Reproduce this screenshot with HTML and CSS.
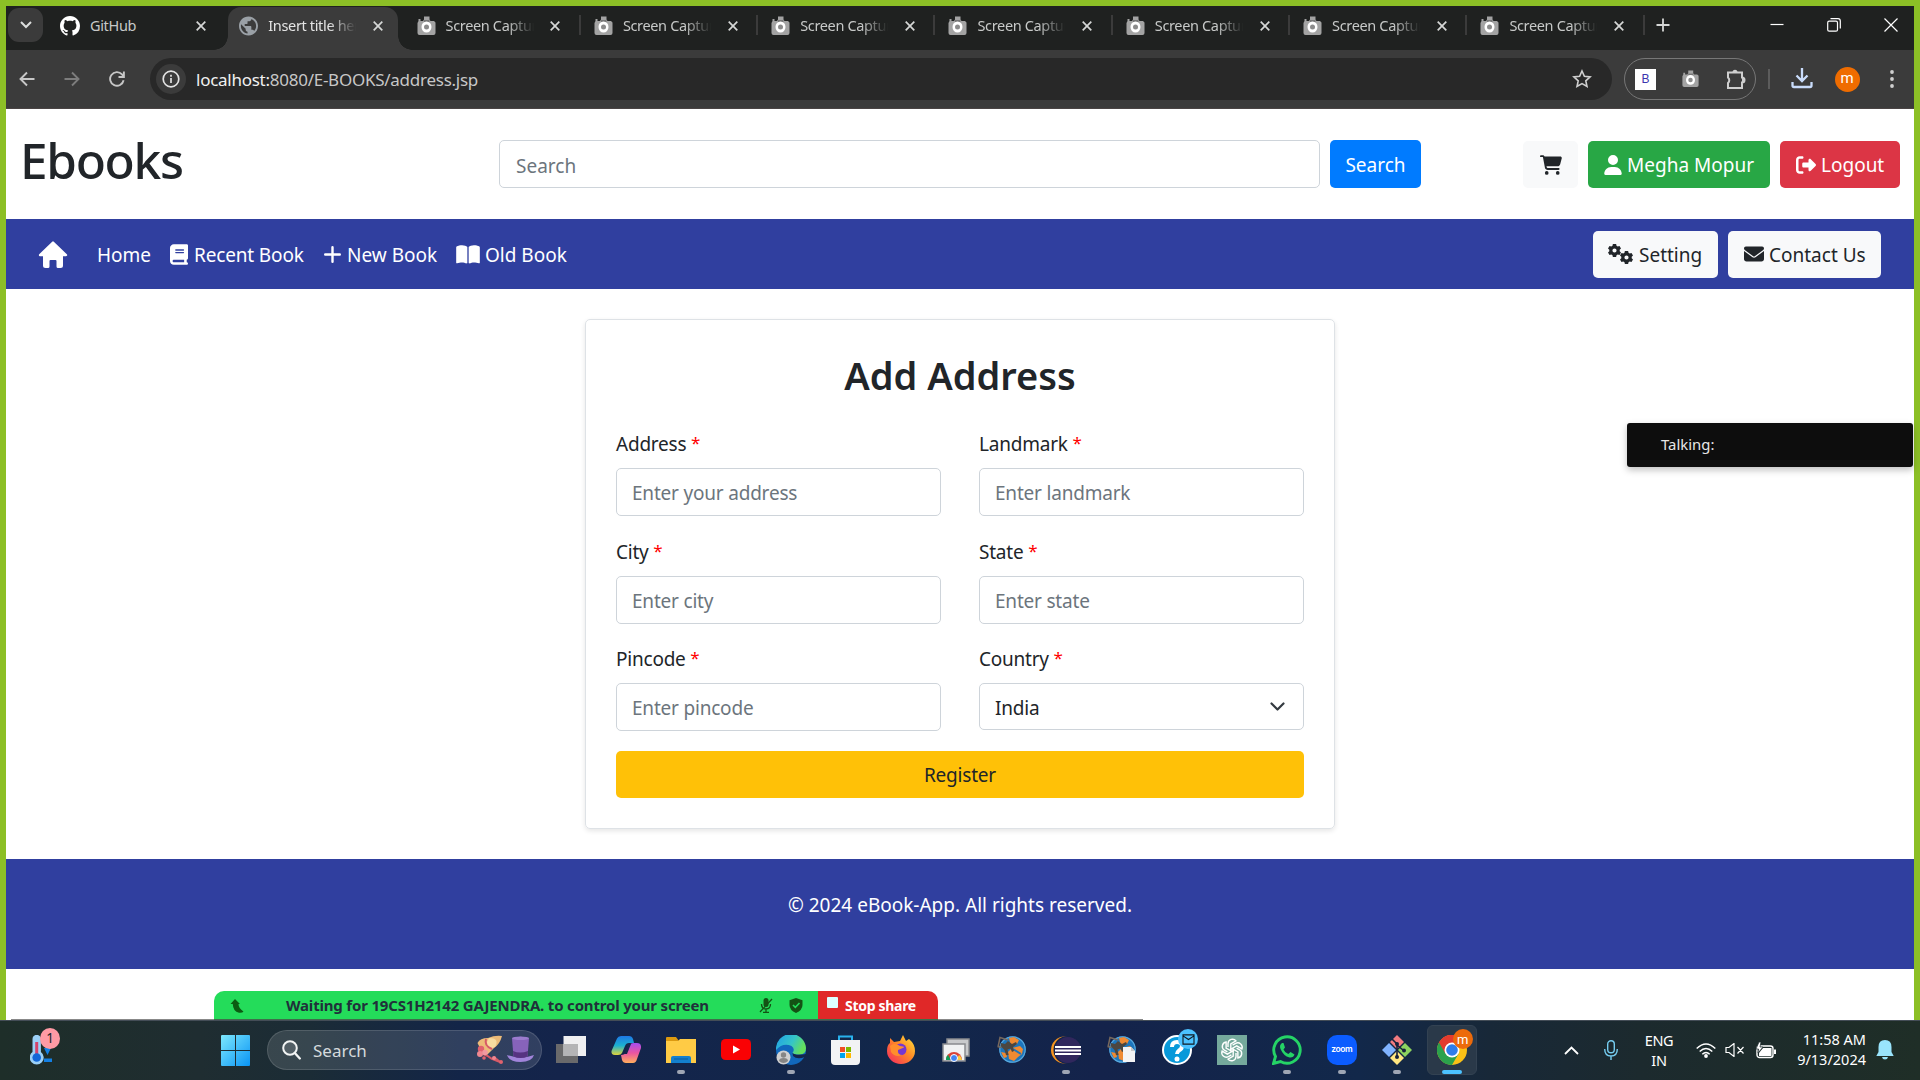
FILE: index.html
```html
<!DOCTYPE html>
<html lang="en">
<head>
<meta charset="utf-8">
<title>Insert title here</title>
<link rel="stylesheet" href="styles.css">
</head>
<body>
<svg class="defs" aria-hidden="true">
  <symbol id="camera" viewBox="0 0 19 20"><path d="M1.500 5V3h2v2H6l1-1.500V.5h5.500v3l1 1.500H17l1.500 1.500V17q0 2-2 2h-14q-2 0-2-2V7z" fill="#a3a3a3"/><path d="M7 4h5.500v2H7z" fill="#777"/><ellipse cx="9.500" cy="11" rx="5" ry="5.500" fill="#fff"/><circle cx="9.500" cy="11" r="2.500" fill="#8b8b8b"/></symbol>
  <symbol id="close" viewBox="0 0 10 10"><path d="M.7.7l8.600 8.600M9.300.7L.7 9.300" stroke="#d5d7d6" stroke-width="1.700" fill="none"/></symbol>
  <symbol id="gear" viewBox="-10 -10 20 20"><path fill-rule="evenodd" d="M-2.500-10h5l.6 2.800 1.800 1 2.800-.9 2.300 4L8-1.200v2.400L10 3.100l-2.300 4-2.800-.9-1.800 1L2.500 10h-5l-.6-2.800-1.800-1-2.800.9-2.300-4L-8 1.200v-2.400L-10-3.100l2.300-4 2.800.9 1.800-1zM0-3.200a3.200 3.200 0 1 0 0 6.400a3.200 3.200 0 1 0 0-6.400z"/></symbol>
  <symbol id="chrome" viewBox="0 0 48 48"><circle cx="24" cy="24" r="24" fill="#fbc116"/><path d="M24 24L3.200 12A24 24 0 0 1 44.800 12z" fill="#ea4335"/><path d="M24 24L3.200 12A24 24 0 0 0 24 48l10.400-18z" fill="#2ba24c"/><path d="M24 12h20.800A24 24 0 0 0 3.200 12l10.400 18z" fill="#e33b2e"/><circle cx="24" cy="24" r="12" fill="#fff"/><circle cx="24" cy="24" r="9.300" fill="#2f7de9"/></symbol>
  <symbol id="tomcat" viewBox="0 0 30 30"><circle cx="16.500" cy="14.500" r="13.200" fill="#1c75bd"/><circle cx="16.500" cy="14.500" r="12.700" fill="none" stroke="#58a8dc" stroke-width="1.200"/><path d="M13 3l5-1 5 3-2 4-6 2zM12 17l4-4 8-2 3 3-1 5-4 3-4 4-5-2zM5 17l5 1 1 4-3 1z" fill="#ef8a32"/><path d="M17 14l8 5" stroke="#1c75bd" stroke-width="2"/><path d="M5 8l4 1 3-3 4 3 4-2 1 2-4 3 1 4-2 1-1.500-3.500-3 1 1 5.500-2.500 0-1.500-5-4-4z" fill="#4c4640"/><path d="M2 12L4 2.500l8 2.500M1.500 11.500l4 1" fill="none" stroke="#77685c" stroke-width="1.500"/></symbol>
</svg>

<div class="screen">
  <div class="tabstrip">
    <button class="tab-search"><svg width="12" height="8" viewBox="0 0 12 8"><path d="M1 1l5 5 5-5" fill="none" stroke="#dcdedd" stroke-width="2"/></svg></button>
    <div class="tabs">
      <div class="tab"><svg class="fav gh" viewBox="0 0 16 16"><path fill="#fff" d="M8 0C3.580 0 0 3.580 0 8c0 3.540 2.290 6.530 5.470 7.590.4.070.55-.17.55-.38 0-.19-.01-.82-.01-1.490-2.010.37-2.530-.49-2.690-.94-.09-.23-.48-.94-.82-1.130-.28-.15-.68-.52-.01-.53.63-.01 1.080.58 1.230.82.72 1.210 1.870.87 2.330.66.07-.52.28-.87.51-1.070-1.780-.2-3.640-.89-3.640-3.950 0-.87.31-1.590.82-2.150-.08-.2-.36-1.020.08-2.120 0 0 .67-.21 2.200.82.64-.18 1.320-.27 2-.27s1.360.09 2 .27c1.530-1.040 2.200-.82 2.200-.82.44 1.100.16 1.920.08 2.120.51.56.82 1.270.82 2.150 0 3.070-1.870 3.750-3.650 3.950.29.25.54.73.54 1.480 0 1.070-.01 1.930-.01 2.200 0 .21.15.46.55.38A8.010 8.010 0 0 0 16 8c0-4.420-3.580-8-8-8z"/></svg><span class="tab-title">GitHub</span><svg class="x"><use href="#close"/></svg></div>
      <div class="tab active"><svg class="fav" viewBox="2 2 20 20"><path fill="#9aa0a6" d="M12 2C6.480 2 2 6.480 2 12s4.480 10 10 10 10-4.480 10-10S17.520 2 12 2zm-1 17.930c-3.950-.49-7-3.850-7-7.930 0-.62.08-1.210.21-1.790L9 15v1c0 1.100.9 2 2 2v1.930zm6.900-2.540c-.26-.81-1-1.390-1.900-1.390h-1v-3c0-.55-.45-1-1-1H8v-2h2c.55 0 1-.45 1-1V7h2c1.100 0 2-.9 2-2v-.41c2.930 1.190 5 4.060 5 7.410 0 2.080-.8 3.970-2.100 5.390z"/></svg><span class="tab-title fade">Insert title here</span><svg class="x"><use href="#close"/></svg></div>
      <div class="tab"><svg class="fav"><use href="#camera"/></svg><span class="tab-title fade">Screen Capture</span><svg class="x"><use href="#close"/></svg></div>
      <div class="tab sep"><svg class="fav"><use href="#camera"/></svg><span class="tab-title fade">Screen Capture</span><svg class="x"><use href="#close"/></svg></div>
      <div class="tab sep"><svg class="fav"><use href="#camera"/></svg><span class="tab-title fade">Screen Capture</span><svg class="x"><use href="#close"/></svg></div>
      <div class="tab sep"><svg class="fav"><use href="#camera"/></svg><span class="tab-title fade">Screen Capture</span><svg class="x"><use href="#close"/></svg></div>
      <div class="tab sep"><svg class="fav"><use href="#camera"/></svg><span class="tab-title fade">Screen Capture</span><svg class="x"><use href="#close"/></svg></div>
      <div class="tab sep"><svg class="fav"><use href="#camera"/></svg><span class="tab-title fade">Screen Capture</span><svg class="x"><use href="#close"/></svg></div>
      <div class="tab sep"><svg class="fav"><use href="#camera"/></svg><span class="tab-title fade">Screen Capture</span><svg class="x"><use href="#close"/></svg></div>
      <div class="new-tab sep"><svg width="14" height="14" viewBox="0 0 14 14"><path d="M7 .5v13M.5 7h13" stroke="#d5d7d6" stroke-width="1.800"/></svg></div>
    </div>
    <div class="window-controls">
      <svg width="14" height="14" viewBox="0 0 14 14"><path d="M.5 6.500h13" stroke="#fff" stroke-width="1.200"/></svg>
      <svg width="14" height="14" viewBox="0 0 14 14"><rect x=".7" y="3.200" width="9.800" height="10" rx="1.500" fill="none" stroke="#fff" stroke-width="1.200"/><path d="M3.500.7h7.500q2.300 0 2.300 2.300v7.500" fill="none" stroke="#fff" stroke-width="1.200"/></svg>
      <svg width="14" height="14" viewBox="0 0 14 14"><path d="M.5.5l13 13M13.500.5l-13 13" stroke="#fff" stroke-width="1.200"/></svg>
    </div>
  </div>

  <div class="toolbar">
    <div class="nav-buttons">
      <svg width="16" height="16" viewBox="0 0 16 16"><path d="M15.500 8H1.500M8 1.500L1.500 8 8 14.500" fill="none" stroke="#c7c7c7" stroke-width="1.900"/></svg>
      <svg width="16" height="16" viewBox="0 0 16 16"><path d="M.5 8h14M8 1.500L14.500 8 8 14.500" fill="none" stroke="#7d7d7d" stroke-width="1.900"/></svg>
      <svg width="16" height="16" viewBox="0 0 16 16"><path d="M14.600 9.300A6.800 6.800 0 1 1 13 3.400L14.800 5.600M14.900.5v5.500H9.500" fill="none" stroke="#c7c7c7" stroke-width="1.900"/></svg>
    </div>
    <div class="omnibox">
      <span class="info"><svg width="18" height="18" viewBox="0 0 18 18"><circle cx="9" cy="9" r="7.800" fill="none" stroke="#e3e3e3" stroke-width="1.700"/><path d="M9 8v5M9 4.800v1.900" stroke="#e3e3e3" stroke-width="1.700"/></svg></span>
      <span class="url"><b>localhost:</b>8080/E-BOOKS/address.jsp</span>
      <svg class="star" width="20" height="20" viewBox="0 0 20 20"><path d="M10 2l2.400 5.300 5.700.6-4.300 3.900 1.200 5.700-5-2.900-5 2.900 1.200-5.700L1.900 7.900l5.700-.6z" fill="none" stroke="#cfcfcf" stroke-width="1.600"/></svg>
    </div>
    <div class="extensions">
      <span class="ext-b">B</span>
      <svg class="ext-cam" width="19" height="18"><use href="#camera"/></svg>
      <svg width="21" height="21" viewBox="0 0 21 21"><path d="M3 3.500h14v5a2.200 2.200 0 0 1 0 5v5.500H3v-5a3.600 3.600 0 0 0 0-5.500z" fill="none" stroke="#cfcfcf" stroke-width="2"/><path d="M7.500 3.500a2.500 2.800 0 0 1 5 0zM17 8.500a2.600 2.500 0 0 1 0 5z" fill="#cfcfcf"/></svg>
    </div>
    <span class="divider"></span>
    <svg class="download" width="22" height="22" viewBox="0 0 22 22"><path d="M11 0v13M5.500 7.500L11 13l5.500-5.500M1.500 14v3.500q0 1.500 1.500 1.500h16q1.500 0 1.500-1.500V14" fill="none" stroke="#c9dcfb" stroke-width="2.300"/></svg>
    <span class="avatar">m</span>
    <svg class="dots" width="4" height="18" viewBox="0 0 4 18"><g fill="#cfcfcf"><circle cx="2" cy="2" r="1.900"/><circle cx="2" cy="9" r="1.900"/><circle cx="2" cy="16" r="1.900"/></g></svg>
  </div>

  <div class="page">
    <header class="site-header">
      <h1 class="brand">Ebooks</h1>
      <form class="search-form"><input class="control search-input" placeholder="Search"><button type="button" class="btn blue">Search</button></form>
      <div class="account">
        <a class="btn light cart"><svg width="22" height="20" viewBox="0 0 576 512"><path d="M0 24C0 10.700 10.700 0 24 0H69.500c22 0 41.500 12.800 50.600 32h411c26.300 0 45.500 25 38.600 50.400l-41 152.300c-8.500 31.400-37 53.300-69.500 53.300H170.700l5.400 28.500c2.200 11.300 12.100 19.500 23.600 19.500H488c13.300 0 24 10.700 24 24s-10.700 24-24 24H199.700c-34.600 0-64.300-24.600-70.700-58.500L77.400 54.500c-.7-3.800-4-6.500-7.900-6.500H24C10.700 48 0 37.300 0 24zM128 464a48 48 0 1 1 96 0 48 48 0 1 1 -96 0zm336-48a48 48 0 1 1 0 96 48 48 0 1 1 0-96z"/></svg></a>
        <a class="btn green user"><svg width="18" height="20" viewBox="0 0 448 512"><path d="M224 256A128 128 0 1 0 224 0a128 128 0 1 0 0 256zm-45.700 48C79.800 304 0 383.800 0 482.300C0 498.700 13.300 512 29.700 512H418.300c16.400 0 29.700-13.300 29.700-29.700C448 383.800 368.200 304 269.700 304H178.300z"/></svg><span>Megha Mopur</span></a>
        <a class="btn red logout"><svg width="20" height="20" viewBox="0 0 512 512"><path d="M377.900 105.900L500.700 228.700c7.200 7.200 11.300 17.100 11.300 27.300s-4.100 20.100-11.300 27.300L377.900 406.100c-6.400 6.400-15 9.900-24 9.900c-18.700 0-33.900-15.200-33.900-33.900l0-62.100-128 0c-17.700 0-32-14.300-32-32l0-64c0-17.700 14.300-32 32-32l128 0 0-62.100c0-18.700 15.200-33.900 33.900-33.900c9 0 17.600 3.600 24 9.900zM160 96L96 96c-17.700 0-32 14.300-32 32l0 256c0 17.700 14.300 32 32 32l64 0c17.700 0 32 14.300 32 32s-14.300 32-32 32l-64 0c-53 0-96-43-96-96L0 128C0 75 43 32 96 32l64 0c17.700 0 32 14.300 32 32s-14.300 32-32 32z"/></svg><span>Logout</span></a>
      </div>
    </header>

    <nav class="site-nav">
      <svg class="house" width="30" height="28" viewBox="0 0 30 28"><path d="M15 1.500L28 14H2z" fill="#fff" stroke="#fff" stroke-width="2.400" stroke-linejoin="round"/><path d="M5 12h20v12.500q0 2.500-2.500 2.500H20q-1.500 0-1.500-1.500V20q0-1-1-1h-5q-1 0-1 1v5.500q0 1.500-1.500 1.500H7.500Q5 27 5 24.500z" fill="#fff"/></svg>
      <a class="link home"><span>Home</span></a>
      <a class="link recent"><svg width="18" height="21" viewBox="0 0 448 512"><path d="M96 0C43 0 0 43 0 96V416c0 53 43 96 96 96H384h32c17.700 0 32-14.300 32-32s-14.300-32-32-32V384c17.700 0 32-14.300 32-32V32c0-17.700-14.300-32-32-32H384 96zm0 384H352v64H96c-17.700 0-32-14.300-32-32s14.300-32 32-32zm32-240c0-8.800 7.200-16 16-16H336c8.800 0 16 7.200 16 16s-7.200 16-16 16H144c-8.800 0-16-7.200-16-16zm16 48H336c8.800 0 16 7.200 16 16s-7.200 16-16 16H144c-8.800 0-16-7.200-16-16s7.200-16 16-16z"/></svg><span>Recent Book</span></a>
      <a class="link new"><svg width="17" height="17" viewBox="0 0 17 17"><path d="M8.500 1.200v14.600M1.200 8.500h14.600" stroke="#fff" stroke-width="2.400" stroke-linecap="round"/></svg><span>New Book</span></a>
      <a class="link old"><svg width="24" height="21" viewBox="0 0 576 512"><path d="M249.600 471.500c10.800 3.800 22.400-4.100 22.400-15.500V78.600c0-4.200-1.600-8.400-5-11C247.400 52 202.400 32 144 32C93.500 32 46.300 45.300 18.100 56.100C6.800 60.500 0 71.700 0 83.800V454.100c0 11.900 12.800 20.200 24.100 16.500C55.600 460.100 105.500 448 144 448c33.900 0 79 14 105.600 23.500zm76.800 0C353 462 398.100 448 432 448c38.500 0 88.400 12.100 119.900 22.600c11.300 3.800 24.100-4.600 24.100-16.500V83.800c0-12.100-6.800-23.300-18.100-27.600C529.700 45.300 482.500 32 432 32c-58.400 0-103.400 20-123 35.600c-3.300 2.600-5 6.800-5 11V456c0 11.400 11.700 19.300 22.400 15.500z"/></svg><span>Old Book</span></a>
      <div class="nav-right">
        <a class="btn light setting"><svg width="25" height="20" viewBox="0 0 25 20"><use href="#gear" x="0" y="0" width="13" height="13"/><use href="#gear" x="12" y="7" width="13" height="13"/></svg><span>Setting</span></a>
        <a class="btn light contact"><svg width="20" height="20" viewBox="0 0 512 512"><path d="M48 64C21.500 64 0 85.500 0 112c0 15.100 7.100 29.300 19.200 38.400L236.800 313.600c11.400 8.500 27 8.500 38.400 0L492.800 150.400c12.100-9.100 19.200-23.300 19.200-38.400c0-26.500-21.500-48-48-48H48zM0 176V384c0 35.300 28.700 64 64 64H448c35.300 0 64-28.700 64-64V176L294.400 339.200c-22.800 17.100-54 17.100-76.800 0L0 176z"/></svg><span>Contact Us</span></a>
      </div>
    </nav>

    <main class="content">
      <form class="card">
        <h2 class="card-title">Add Address</h2>
        <div class="fields">
          <label class="field"><span class="label">Address <i>*</i></span><input class="control" placeholder="Enter your address"></label>
          <label class="field"><span class="label">Landmark <i>*</i></span><input class="control" placeholder="Enter landmark"></label>
          <label class="field"><span class="label">City <i>*</i></span><input class="control" placeholder="Enter city"></label>
          <label class="field"><span class="label">State <i>*</i></span><input class="control" placeholder="Enter state"></label>
          <label class="field"><span class="label">Pincode <i>*</i></span><input class="control" placeholder="Enter pincode"></label>
          <label class="field"><span class="label">Country <i>*</i></span><span class="control select"><span>India</span><svg width="15" height="9" viewBox="0 0 15 9"><path d="M1.500 1.500l6 6 6-6" fill="none" stroke="#343a40" stroke-width="2.200" stroke-linecap="round" stroke-linejoin="round"/></svg></span></label>
        </div>
        <button type="button" class="btn yellow">Register</button>
      </form>
    </main>
    <footer class="site-footer">© 2024 eBook-App. All rights reserved.</footer>
  </div>
</div>

<div class="talking">Talking:</div>

<div class="share-line"></div>
<div class="share-bar">
  <div class="share-status">
    <svg width="14" height="14" viewBox="0 0 14 14"><path d="M5 0l5 5H8.500q0 4 5 7.500-1 1.500-4.500 1.200Q3 12.500 2.800 5H.5z" fill="#0b5c12"/></svg>
    <span class="share-text">Waiting for 19CS1H2142 GAJENDRA. to control your screen</span>
    <svg class="muted" width="14" height="15" viewBox="0 0 14 15"><rect x="4.500" y="0" width="5" height="9" rx="2.500" fill="#145214"/><path d="M2.500 6q0 5 4.500 5t4.500-5M7 11v3M4 14.300h6M1 14L13 1" fill="none" stroke="#145214" stroke-width="1.300"/></svg>
    <svg width="14" height="15" viewBox="0 0 14 15"><path d="M7 0l6.500 2.300V7q0 5-6.500 8Q.5 12 .5 7V2.300z" fill="#145214"/><path d="M4 7l2.300 2.300L10.500 5" fill="none" stroke="#24dc5a" stroke-width="1.600"/></svg>
  </div>
  <div class="stop-share"><span class="stop-icon"></span>Stop share</div>
</div>

<div class="taskbar">
  <div class="weather"><svg width="22" height="30" viewBox="0 0 22 30"><path d="M2.500 4a4.200 4.200 0 0 1 8.400 0v13a7 7 0 1 1-8.400 0z" fill="#9bd0f7"/><path d="M6.700 7v15" stroke="#d4436b" stroke-width="3"/><circle cx="6.700" cy="22.500" r="4.300" fill="#1267d8"/><path d="M14 13h7l-3.500 7zM14 23.500h8V27h-8z" fill="#1380e4"/></svg><span class="count">1</span></div>
  <svg class="start" width="29" height="31" viewBox="0 0 29 31"><defs><linearGradient id="wg" x1="0" y1="0" x2="1" y2="1"><stop offset="0" stop-color="#7de8fd"/><stop offset="1" stop-color="#0994f5"/></linearGradient></defs><path fill="url(#wg)" d="M1 0h13v15H0V1q0-1 1-1zM15 0h13q1 0 1 1v14H15zM0 16h14v15H1q-1 0-1-1zM15 16h14v14q0 1-1 1H15z"/></svg>
  <div class="task-search">
    <svg width="19" height="20" viewBox="0 0 19 20"><circle cx="8" cy="8" r="6.800" fill="#ffffff22" stroke="#f2f4f4" stroke-width="2"/><path d="M12.800 13l5 5.500" stroke="#f2f4f4" stroke-width="2.300" stroke-linecap="round"/></svg>
    <span>Search</span>
    <svg class="hats" width="58" height="30" viewBox="0 0 58 30"><path d="M1.500 8Q4 3 12 3q7-3 14-2-2 8-8 12-3 3-7 7-3-3-5-3z" fill="#edbb78"/><path d="M13 3q11 0 6 9-8 4-9-3z" fill="#f9dca0"/><path d="M10 4q-2 7 6 10" fill="none" stroke="#d75a67" stroke-width="2"/><path d="M7 19q6 2 9 5l8 3M18 22l6 5" fill="none" stroke="#d75a67" stroke-width="2"/><circle cx="5" cy="14" r="3.200" fill="#e0626e"/><circle cx="4" cy="19" r="3" fill="#ef8790"/><circle cx="9" cy="17.500" r="2.800" fill="#f09aa0"/><circle cx="8" cy="23" r="1.800" fill="#e0626e"/><circle cx="18" cy="23" r="2" fill="#ef8790"/><circle cx="25" cy="27" r="2" fill="#e0626e"/><path d="M31 20q13 5 27 0-2 7-13.500 7T31 20z" fill="#a184da"/><path d="M36 3.500q8.500-3.500 17 0l-1.500 18q-7 3-14 0z" fill="#8763bb"/><path d="M37 16q7 3 15 0l-.5 5.500q-7 3-14 0z" fill="#563381"/><ellipse cx="44.500" cy="3.300" rx="8.500" ry="1.800" fill="#9b7bcd"/></svg>
  </div>
  <div class="apps">
    <div class="app"><svg viewBox="0 0 30 30"><path d="M0 9h22v19H0z" fill="#69696b"/><path d="M7.500 1h22.500v20H7.500z" fill="#efeff1"/><path d="M7.500 9H22v12H7.500z" fill="#b4b4b6"/></svg></div>
    <div class="app"><svg viewBox="0 0 30 30"><defs><linearGradient id="ca" x1="0" y1="0" x2="0" y2="1"><stop offset="0" stop-color="#1e78e6"/><stop offset=".5" stop-color="#1bb0d1"/><stop offset="1" stop-color="#dfd43b"/></linearGradient><linearGradient id="cb" x1="0" y1="0" x2="0" y2="1"><stop offset="0" stop-color="#a64df0"/><stop offset=".5" stop-color="#ea55a0"/><stop offset="1" stop-color="#ffae5c"/></linearGradient></defs><path d="M6 3.500Q7 1 10 1h8q3 0 4 3l1 4h-5q-3 0-4 3l-3 7q-1 2-4 2H4q-4 0-3.500-4z" fill="url(#ca)"/><path d="M23 8h3q4.500 0 4 5l-4 11q-1 4-4 4h-7q-3 0-4-3l-1-5q4 0 5-3l3-6q1-3 5-3z" fill="url(#cb)"/><path d="M17 9l-4 10h3l4-10z" fill="#16264c"/></svg></div>
    <div class="app run"><svg viewBox="0 0 30 30"><path d="M0 3q0-1 1-1h9l3 4H0z" fill="#dc9a10"/><path d="M0 6h12l2-2h16v24H0z" fill="#ffcb45"/><path d="M5 28v-5q0-2 2-2h16q2 0 2 2v5z" fill="#1380ce"/><path d="M8 24h14" stroke="#0a5a9c"/></svg></div>
    <div class="app"><svg viewBox="0 0 30 30"><rect y="4" width="30" height="21" rx="4.500" fill="#fa0204"/><path d="M12 10.500l7 4-7 4z" fill="#fff"/></svg></div>
    <div class="app run"><svg viewBox="0 0 30 30"><defs><linearGradient id="ea" x1="0" y1="0" x2="1" y2=".4"><stop offset="0" stop-color="#1f9ee8"/><stop offset=".6" stop-color="#35c5c8"/><stop offset="1" stop-color="#64df5d"/></linearGradient></defs><circle cx="15" cy="15" r="15" fill="#1168bd"/><path d="M0 15A15 15 0 0 1 30 13q0 6-6 6.500-6 .5-7.500-1.500 3-4-1-7Q7 7 0 15z" fill="url(#ea)"/><path d="M16.500 18q3 3 14 1l-1.500 3q-8 3-12-1z" fill="#14254c"/><circle cx="7.500" cy="22.500" r="7" fill="#cfd0d1"/><circle cx="7.500" cy="20" r="2.700" fill="#858585"/><path d="M3 26q0-3 4.500-3t4.500 3q-4.500 4-9 0z" fill="#858585"/></svg></div>
    <div class="app"><svg viewBox="0 0 30 30"><path d="M8 6V1.500h13V6" fill="none" stroke="#28b1ed" stroke-width="2"/><path d="M0 5h29v21q0 4-4 4H4q-4 0-4-4z" fill="#f2f3f4"/><path d="M9 12h5v5H9z" fill="#f04e25"/><path d="M15 12h5v5h-5z" fill="#7eb900"/><path d="M9 18h5v5H9z" fill="#00a3ee"/><path d="M15 18h5v5h-5z" fill="#ffb800"/></svg></div>
    <div class="app"><svg viewBox="0 0 30 30"><defs><linearGradient id="ff" x1="1" y1="0" x2="0" y2="1"><stop offset="0" stop-color="#ffe83d"/><stop offset=".45" stop-color="#ff8a25"/><stop offset="1" stop-color="#f52263"/></linearGradient></defs><path d="M4 3l4 4 6-1 3-6 3 6 3-2q6 5 6 12a14 13 0 0 1-28 0q0-6 3-8z" fill="url(#ff)"/><circle cx="14.500" cy="14.500" r="6" fill="#7537d1"/><path d="M4 11q4-4 10 0 4 0 4 1.500l-6 2.500q-1 5 5 5-8 3-12-3z" fill="#ff8e2c"/></svg></div>
    <div class="app"><svg viewBox="0 0 30 30"><path d="M6 4h22v17H6z" fill="#c9cacc" stroke="#898b8e" stroke-width="1.500"/><path d="M2 9h22v17H2z" fill="#f1f2f3" stroke="#898b8e" stroke-width="1.500"/><path d="M5 25a8 8 0 0 1 16 0z" fill="#db4437"/><path d="M5 25q0-4 2-5l3 5z" fill="#0f9d58"/><path d="M15 25l3-5q3 2 3 5z" fill="#ffcd40"/><circle cx="13" cy="23" r="3.500" fill="#4285f4" stroke="#fff"/></svg></div>
    <div class="app"><svg viewBox="0 0 30 30"><use href="#tomcat"/></svg></div>
    <div class="app run"><svg viewBox="0 0 30 30"><circle cx="13.500" cy="15" r="13.500" fill="#f7941e"/><circle cx="16.500" cy="15" r="14" fill="#15234b"/><circle cx="17" cy="15" r="13" fill="#30275d"/><path d="M4 12h26M4 15.500h26M4 19h26" stroke="#fff" stroke-width="2"/></svg></div>
    <div class="app"><svg viewBox="0 0 30 30"><use href="#tomcat"/><path d="M17 12h8l4 4v11H17z" fill="#f3f3f4"/><path d="M25 12v4h4z" fill="#c8c8c8"/></svg></div>
    <div class="app"><svg viewBox="0 0 30 30"><circle cx="15" cy="15" r="14" fill="#0899da" stroke="#fff" stroke-width="2"/><path d="M10 12q0-5 5-5t5 4q0 3-3 4.500-2 1.500-2 3.500" fill="none" stroke="#fff" stroke-width="4"/><circle cx="15" cy="24" r="2.500" fill="#fff"/></svg><span class="badge mail"><svg viewBox="0 0 14 12"><path d="M1 1h12v10H1zM1 2l6 4 6-4" fill="none" stroke="#101820" stroke-width="1.200"/></svg></span></div>
    <div class="app"><svg viewBox="0 0 30 30"><path d="M0 0h30v30H0z" fill="#75a99c"/><g fill="none" stroke="#fff" stroke-width="1.400" transform="translate(15 15)"><path id="petal" d="M-4-3v-3.500a4.500 4.500 0 0 1 8-2.600l-5.200 3v7.500"/><use href="#petal" transform="rotate(60)"/><use href="#petal" transform="rotate(120)"/><use href="#petal" transform="rotate(180)"/><use href="#petal" transform="rotate(240)"/><use href="#petal" transform="rotate(300)"/></g></svg></div>
    <div class="app run"><svg viewBox="0 0 30 30"><path d="M1.500 28.500l2-7a13.200 13.200 0 1 1 5 5z" fill="none" stroke="#25d366" stroke-width="2.900"/><path d="M10 8q-3 2-1.500 6 3 7 9 8.500 4 .5 5-3l-4-2.500-2.200 2q-3.300-1-4.800-4.500l1.500-2L11.500 8z" fill="#25d366"/></svg></div>
    <div class="app run"><svg viewBox="0 0 30 30"><rect width="30" height="30" rx="10" fill="#0b5cff"/></svg><span class="zoom-word">zoom</span></div>
    <div class="app run"><svg viewBox="0 0 30 30"><path d="M15 0l7 7-7 7-7-7z" fill="#f27b80"/><path d="M7 8l7 7-7 7-7-7z" fill="#80b3ff"/><path d="M23 8l7 7-7 7-7-7z" fill="#8dd35f"/><path d="M15 16l7 7-7 7-7-7z" fill="#ffe680"/><path d="M10 4l5 5v13M15 10l6 5" fill="none" stroke="#16213b" stroke-width="1.600"/><circle cx="15" cy="9" r="2" fill="#16213b"/><circle cx="22" cy="15.500" r="2" fill="#16213b"/><circle cx="15" cy="22" r="2" fill="#16213b"/></svg></div>
    <div class="app current"><svg viewBox="0 0 30 30"><use href="#chrome"/></svg><span class="badge me">m</span></div>
  </div>
  <div class="tray">
    <svg class="chev" width="15" height="9" viewBox="0 0 15 9"><path d="M1 8l6.500-6.500L14 8" fill="none" stroke="#fff" stroke-width="1.800"/></svg>
    <svg class="mic" width="14" height="20" viewBox="0 0 14 20"><rect x="3.700" y=".8" width="6.600" height="12" rx="3.300" fill="none" stroke="#76cdf0" stroke-width="1.400"/><path d="M.7 9q0 7 6.300 7t6.300-7M7 16v4" fill="none" stroke="#76cdf0" stroke-width="1.400"/></svg>
    <div class="lang">ENG<br>IN</div>
    <svg class="wifi" width="20" height="15" viewBox="0 0 20 15"><g fill="none" stroke="#fff" stroke-width="1.500"><path d="M.7 5.500q9.300-9 18.600 0M3.700 8.500q6.300-6 12.600 0M6.300 11.300q3.700-3.500 7.400 0"/></g><circle cx="10" cy="13" r="1.900" fill="#fff"/></svg>
    <svg class="vol" width="20" height="14" viewBox="0 0 20 14"><path d="M1 4.500h3l5-4v13l-5-4H1zM12.500 4l6 6.500M18.500 4l-6 6.500" fill="none" stroke="#fff" stroke-width="1.200"/></svg>
    <svg class="bat" width="20" height="17" viewBox="0 0 20 17"><rect x="1" y="4" width="16" height="11.500" rx="2.500" fill="none" stroke="#fff" stroke-width="1.400"/><path d="M7 6h8.500v8H3v-3zM18 7.500h2v4.500h-2z" fill="#fff"/><path d="M3 0L0 7h2.500L2 11l5-6H4l1-5z" fill="#fff" stroke="#1d2b2e" stroke-width=".7"/></svg>
    <div class="clock">11:58 AM<br>9/13/2024</div>
    <svg class="bell" width="18" height="20" viewBox="0 0 18 20"><path d="M9 0q6.500 0 6.500 7v5l2.200 4H.3l2.200-4V7Q2.500 0 9 0zM6 17h6q-.5 2.500-3 2.500T6 17z" fill="#99e4fc"/></svg>
  </div>
</div>
</body>
</html>
```

FILE: styles.css
```css
* { box-sizing: border-box; }
body {
  margin: 0;
  width: 1920px;
  height: 1080px;
  overflow: hidden;
  position: relative;
  display: flex;
  flex-direction: column;
  font-family: "Noto Sans", "Open Sans", sans-serif;
  color: #212529;
  background: #fff;
}
svg { display: block; flex: none; }
.defs { display: none; }
h1, h2 { margin: 0; }
button, input { font: inherit; color: inherit; letter-spacing: inherit; }

.screen {
  height: 1020px;
  border: 6px solid #8cbf26;
  border-bottom: 0;
  display: flex;
  flex-direction: column;
  flex: none;
}

/* Tab strip */
.tabstrip { height: 44px; background: #1f2120; display: flex; padding-left: 2px; font-size: 14.500px; color: #c7c9c8; }
.tab-search { width: 35px; height: 34px; margin: 2px 5px 0 0; padding: 0; border: 0; border-radius: 11px; background: #3b3b3b; display: flex; align-items: center; justify-content: center; }
.tabs { display: flex; }
.tab { width: 177.300px; height: 44px; padding: 0 19.500px 5px 14px; display: flex; align-items: center; position: relative; white-space: nowrap; }
.fav { width: 19px; height: 20px; margin-right: 10px; }
.gh { width: 20px; margin-left: -2px; }
.tab-title { width: 90px; margin-top: -2px; overflow: hidden; letter-spacing: -.35px; line-height: 20px; }
.fade { mask-image: linear-gradient(90deg, #000 68%, transparent 98%); }
.x { width: 10px; height: 10px; margin-left: auto; }
.active { color: #e4e4e4; }
.active::before { content: ""; position: absolute; z-index: 0; inset: 1px 5px 0 3px; background: #3b3b3b; border-radius: 13px 13px 0 0; }
.active::after { content: ""; position: absolute; left: -11px; right: -9px; bottom: 0; height: 14px; background: radial-gradient(circle at 0 0, transparent 13.500px, #3b3b3b 14px) 0 0 / 14px 14px no-repeat, radial-gradient(circle at 100% 0, transparent 13.500px, #3b3b3b 14px) 100% 0 / 14px 14px no-repeat; }
.active > * { position: relative; z-index: 1; }
.sep::before { content: ""; position: absolute; left: -1px; top: 9px; width: 2px; height: 20px; background: #3b3b3b; }
.new-tab { position: relative; padding: 12px 0 0 12px; }
.window-controls { margin-left: auto; display: flex; gap: 43px; padding: 12px 16px 0 0; }

/* Address toolbar */
.toolbar { height: 59px; background: #3b3b3b; border-bottom: 1px solid #4a4444; display: flex; align-items: center; }
.nav-buttons { display: flex; gap: 29px; padding-left: 13px; width: 144px; }
.omnibox { width: 1462px; height: 42px; border-radius: 21px; background: #282828; display: flex; align-items: center; padding: 0 20px 0 6px; }
.info { width: 30px; height: 30px; border-radius: 50%; background: #3b3b3b; display: grid; place-items: center; }
.url { margin-left: 10px; font-size: 17px; letter-spacing: -.260px; color: #c7c7c7; }
.url b { font-weight: 400; color: #f0f0f0; }
.star { margin-left: auto; }
.extensions { width: 132px; height: 42px; border: 1px solid #777; border-radius: 21px; margin-left: 12px; display: flex; align-items: center; padding: 0 9px 0 10px; justify-content: space-between; }
.ext-b { width: 21px; height: 21px; background: #fff; color: #3a35ae; font: 12px/21px "Liberation Sans", sans-serif; text-align: center; }
.divider { width: 1.500px; height: 20px; background: #5c5c5c; margin-left: 12px; }
.download { margin-left: 21px; }
.avatar { width: 25px; height: 25px; border-radius: 50%; background: #ef6c00; color: #fff; font: 15px/23px Roboto, sans-serif; text-align: center; margin-left: 22px; }
.dots { margin-left: 30px; }

/* Bookshop page */
.page { flex: 1; font-size: 19px; }
.btn { height: 47px; border: 0; border-radius: 5px; display: flex; align-items: center; white-space: nowrap; }
.btn svg { fill: currentColor; }
.btn span, .link span { padding-top: 1px; }
.blue { background: #007bff; color: #fff; }
.green { background: #28a745; color: #fff; }
.red { background: #dc3545; color: #fff; }
.light { background: #f8f9fa; }
.yellow { background: #ffc107; }
.control { border: 1px solid #ced4da; border-radius: 5px; height: 48px; padding: 2px 15px 0; background: #fff; outline: 0; letter-spacing: -.200px; }
.control::placeholder { color: #6c757d; opacity: 1; }

.site-header { height: 110px; display: flex; align-items: flex-start; padding-top: 31px; }
.brand { width: 493px; padding-left: 14px; margin-top: -15px; font-size: 49.500px; line-height: 70px; font-weight: 500; letter-spacing: -1.300px; }
.search-form { display: flex; gap: 10px; }
.search-input { width: 821px; padding: 4px 16px 0; letter-spacing: 0; }
.blue { width: 91px; height: 48px; justify-content: center; padding: 2px 0 0; }
.account { display: flex; gap: 10px; margin: 1px 14px 0 auto; }
.cart { width: 55px; justify-content: center; }
.user { width: 182px; padding-left: 16px; gap: 5px; }
.logout { width: 120px; padding-left: 16px; gap: 5px; }

.site-nav { height: 70px; background: #303f9f; color: #fff; display: flex; align-items: center; padding: 0 33px 0 32px; }
.site-nav svg { fill: currentColor; }
.house { margin-top: 2px; }
.link { display: flex; align-items: center; white-space: nowrap; }
.home { margin-left: 29px; width: 73px; }
.recent { gap: 6px; width: 154px; }
.recent span { letter-spacing: -.150px; }
.new { gap: 6px; width: 132px; }
.old { gap: 5px; }
.nav-right { margin-left: auto; display: flex; gap: 10px; color: #212529; }
.setting { width: 125px; padding-left: 15px; gap: 6px; }
.contact { width: 153px; padding-left: 16px; gap: 5px; }

.content { padding-top: 30px; height: 570px; }
.card { width: 750px; height: 510px; margin: 0 auto; padding: 28px 30px 0; border: 1px solid #dee2e6; border-radius: 5px; box-shadow: 0 2px 5px rgba(0, 0, 0, .1); }
.card-title { font-size: 38px; line-height: 54px; font-weight: 600; text-align: center; }
.fields { display: grid; grid-template-columns: 325px 325px; column-gap: 38px; grid-auto-rows: 107.500px; margin-top: 20px; }
.field { display: flex; flex-direction: column; }
.label { line-height: 44px; height: 46px; letter-spacing: -.220px; }
.label i { font-style: normal; font-size: 17px; line-height: 0; vertical-align: 2px; color: #f00; }
.select { height: 47px; display: flex; align-items: center; justify-content: space-between; padding: 2px 18px 0 15px; }
.select svg { margin-top: -3px; }
.yellow { width: 688px; justify-content: center; margin-top: 6px; padding: 2px 0 0; letter-spacing: -.200px; }
.site-footer { height: 110px; background: #303f9f; color: #fff; text-align: center; padding-top: 29px; line-height: 34px; }

/* Screen sharing overlays */
.talking { position: absolute; left: 1627px; top: 423px; width: 286px; height: 44px; border-radius: 3px; background: #0d0d0d; color: #e6e6e6; font-size: 14.900px; line-height: 43px; padding-left: 34px; box-shadow: 0 3px 7px rgba(0, 0, 0, .25); }
.share-line { position: absolute; left: 11px; top: 1019px; width: 1132px; height: 1px; background: #888; }
.share-bar { position: absolute; left: 214px; top: 991px; width: 724px; height: 29px; border-radius: 10px 10px 0 0; overflow: hidden; border-bottom: 1px solid #3d6f4a; display: flex; font-size: 15px; font-weight: 700; white-space: nowrap; }
.share-status { width: 604px; background: #24dc5a; color: #20303a; display: flex; align-items: center; padding: 1px 15px 0 16px; }
.share-text { width: 472px; margin-top: -2px; padding-left: 42px; letter-spacing: -.180px; }
.muted { margin: 0 16px 0 auto; }
.stop-share { flex: 1; background: #e02828; color: #fff; display: flex; align-items: center; padding-left: 9px; font-size: 14px; letter-spacing: -.3px; }
.stop-icon { width: 11px; height: 11px; background: #dff; margin: -5px 7px 0 0; border-radius: 1px; }

/* Windows taskbar */
.taskbar { height: 60px; border-top: 1px solid #444d57; background: linear-gradient(90deg, #1e2e29, #1f2d31 200px, #1b2c36 310px, #132548 460px, #14244b 560px, #12274a 900px, #14234b 1100px, #12284a 1360px, #182838 1490px, #1c2a2e 1640px, #1f2e27); display: flex; align-items: center; flex: none; padding-bottom: 1px; }
.weather { position: relative; margin-left: 30px; width: 191px; }
.count { position: absolute; left: 10px; top: -7px; width: 20px; height: 21px; border-radius: 50%; background: #ff9aa5; color: #20242a; font-size: 13.500px; line-height: 21px; text-align: center; }
.task-search { width: 275px; height: 40px; margin-left: 17px; border-radius: 20px; border: 1px solid #ffffff22; background: #ffffff20; color: #d5dadd; display: flex; align-items: center; padding: 0 7px 0 14px; font-size: 17px; }
.task-search span { margin-left: 12px; }
.hats { margin-left: auto; }
.apps { display: flex; margin-left: 1.500px; }
.app { width: 55.060px; height: 50px; display: grid; place-items: center; position: relative; }
.app > svg { width: 30px; height: 30px; }
.run::after, .current::after { content: ""; position: absolute; left: 50%; bottom: 1px; width: 8px; height: 4px; margin-left: -4px; border-radius: 2px; background: #9fa6b4; }
.current { width: 50px; margin-left: 2.500px; background: #2a3949; border: 1px solid #334252; border-radius: 6px; }
.current::after { width: 20px; margin-left: -10px; bottom: 0; background: #4cc2ff; }
.badge { position: absolute; width: 20px; height: 20px; border-radius: 50%; right: 6px; top: 4px; display: grid; place-items: center; }
.mail { background: #4cc2ff; }
.mail svg { width: 13px; height: 11px; }
.me { background: #ec6a0b; color: #fff; font: 13px Roboto, sans-serif; right: 3px; top: 3px; }
.zoom-word { position: absolute; top: 16px; left: 0; right: 0; text-align: center; color: #fff; font: 600 8.500px/16px Inter, sans-serif; letter-spacing: -.4px; }
.tray { margin-left: auto; display: flex; align-items: center; color: #fff; font-size: 14.500px; line-height: 20px; padding-right: 26px; }
.lang { width: 54px; text-align: center; margin-left: 14px; letter-spacing: -.300px; }
.mic { margin-left: 25px; }
.wifi { margin-left: 10px; }
.vol { margin-left: 9px; }
.bat { margin-left: 11px; }
.clock { width: 90px; text-align: right; letter-spacing: 0; margin-top: -2px; }
.bell { margin-left: 10px; }
```
